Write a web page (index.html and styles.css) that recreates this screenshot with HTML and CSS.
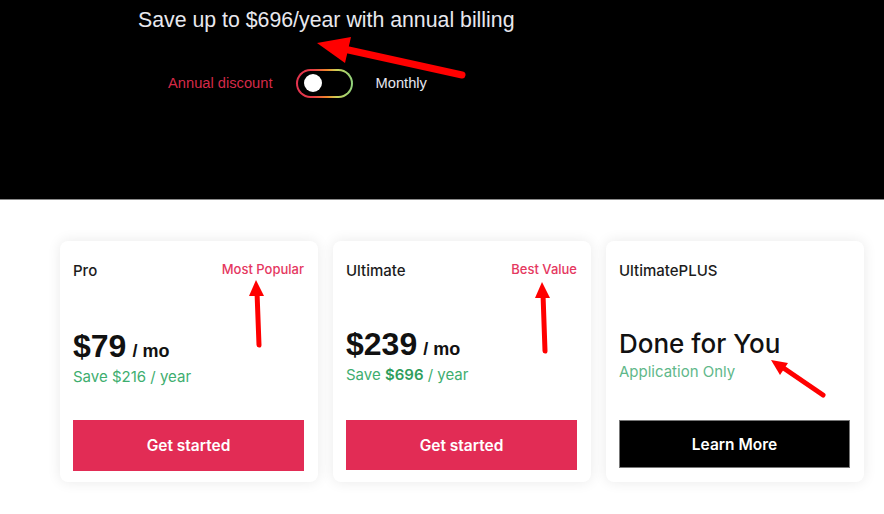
FILE: index.html
```html
<!DOCTYPE html>
<html>
<head>
<meta charset="utf-8">
<link rel="stylesheet" href="styles.css">
</head>
<body>
<div class="page">
  <header class="hero">
    <h1 class="hero-title">Save up to $696/year with annual billing</h1>
    <div class="billing-row">
      <span class="billing-annual">Annual discount</span>
      <span class="toggle"><span class="toggle-inner"><span class="toggle-knob"></span></span></span>
      <span class="billing-monthly">Monthly</span>
    </div>
  </header>
  <section class="plans">
    <div class="card card-pro">
      <div class="card-head">
        <span class="card-name">Pro</span>
        <span class="card-tag">Most Popular</span>
      </div>
      <div class="card-price">
        <div class="price"><span class="price-amount">$79</span><span class="price-unit">/ mo</span></div>
        <div class="save">Save $216 / year</div>
      </div>
      <button class="btn btn-red">Get started</button>
    </div>
    <div class="card">
      <div class="card-head">
        <span class="card-name">Ultimate</span>
        <span class="card-tag">Best Value</span>
      </div>
      <div class="card-price">
        <div class="price"><span class="price-amount">$239</span><span class="price-unit">/ mo</span></div>
        <div class="save">Save <b>$696</b> / year</div>
      </div>
      <button class="btn btn-red">Get started</button>
    </div>
    <div class="card">
      <div class="card-head">
        <span class="card-name">UltimatePLUS</span>
      </div>
      <div class="card-price">
        <div class="price"><span class="price-done">Done for You</span></div>
        <div class="save save-light">Application Only</div>
      </div>
      <button class="btn btn-black">Learn More</button>
    </div>
  </section>
  <svg class="annotations" width="884" height="514" viewBox="0 0 884 514">
    <line x1="462" y1="75" x2="344" y2="49" class="arrow-shaft" stroke-width="7"/>
    <polygon points="317,43 351,37 345,63" class="arrow-head"/>
    <line x1="259" y1="345" x2="257" y2="292" class="arrow-shaft" stroke-width="5"/>
    <polygon points="256,280 249,296 264,296" class="arrow-head"/>
    <line x1="545" y1="351" x2="543" y2="294" class="arrow-shaft" stroke-width="5"/>
    <polygon points="542,282 535,298 550,298" class="arrow-head"/>
    <line x1="823" y1="395" x2="782" y2="367" class="arrow-shaft" stroke-width="5"/>
    <polygon points="771,360 780,375 788,363" class="arrow-head"/>
  </svg>
</div>
</body>
</html>
```
FILE: styles.css
```css
* { box-sizing: border-box; }
html, body { margin: 0; padding: 0; background: #fff; }
body { font-family: "Liberation Sans", Arial, sans-serif; }
.page { position: relative; width: 884px; height: 514px; overflow: hidden; }

.hero {
  background: #000;
  height: 200px;
  border-bottom: 1px solid #8a8a8a;
  padding: 8px 0 0 138px;
}
.hero-title {
  margin: 0;
  font-weight: 400;
  font-size: 21.3px;
  line-height: 25px;
  color: #e8e8ee;
}
.billing-row {
  display: flex;
  align-items: center;
  margin: 35px 0 0 30px;
  height: 30px;
  font-size: 14.7px;
}
.billing-annual { color: #d42a48; }
.billing-monthly { color: #e6e6ef; }
.toggle {
  margin: 0 23px 0 23px;
  width: 57px;
  height: 29px;
  border-radius: 15px;
  padding: 2px;
  background: linear-gradient(90deg, #e2334f 0%, #e63c45 30%, #f08a2c 55%, #c9d25a 72%, #8ed27c 100%);
  display: flex;
}
.toggle-inner {
  flex: 1;
  background: #000;
  border-radius: 13px;
  display: flex;
  align-items: center;
  padding-left: 6px;
}
.toggle-knob {
  width: 18px;
  height: 18px;
  border-radius: 50%;
  background: #fff;
}

.plans {
  display: flex;
  gap: 15px;
  padding: 41px 0 0 60px;
}
.card {
  width: 258px;
  height: 241px;
  background: #fff;
  border-radius: 8px;
  box-shadow: 0 0 14px rgba(0, 0, 0, 0.09);
  padding: 19px 14px 12px 13px;
  display: flex;
  flex-direction: column;
  font-family: Inter, "Liberation Sans", sans-serif;
}
.card-head {
  display: flex;
  justify-content: space-between;
  align-items: center;
  height: 20px;
}
.card-name { font-size: 15px; font-weight: 500; color: #1c1c1c; }
.card-tag { font-size: 13px; font-weight: 500; color: #e5385f; margin-top: -3px; }
.card-price { margin-top: 46px; }
.card-pro .card-price { margin-top: 48px; }
.price { display: flex; align-items: baseline; height: 36px; }
.price-amount {
  font-family: "Liberation Sans", Arial, sans-serif;
  font-size: 32px; font-weight: 700; color: #111; line-height: 36px;
}
.price-unit {
  font-family: "Liberation Sans", Arial, sans-serif;
  font-size: 18px; font-weight: 700; color: #111; margin-left: 6px;
}
.price-done { font-size: 26px; font-weight: 500; color: #111; line-height: 36px; }
.save { font-size: 15px; color: #3eae6f; line-height: 20px; margin-top: 3px; }
.save b { font-weight: 600; color: #2f9e5c; }
.save-light { color: #5fb88a; margin-top: 0; }
.btn {
  margin-top: auto;
  height: 50px;
  border: none;
  border-radius: 0;
  font-family: Inter, "Liberation Sans", sans-serif;
  font-size: 15.5px;
  font-weight: 600;
  color: #fff;
  width: 100%;
}
.card-pro .btn { height: 51px; margin-bottom: -1px; }
.btn-red { background: #e22c55; }
.btn-black { background: #000; border: 1px solid #777; height: 48px; margin-bottom: 2px; }

.annotations { position: absolute; left: 0; top: 0; pointer-events: none; }
.arrow-shaft { stroke: #f00; stroke-linecap: round; }
.arrow-head { fill: #f00; }
```
